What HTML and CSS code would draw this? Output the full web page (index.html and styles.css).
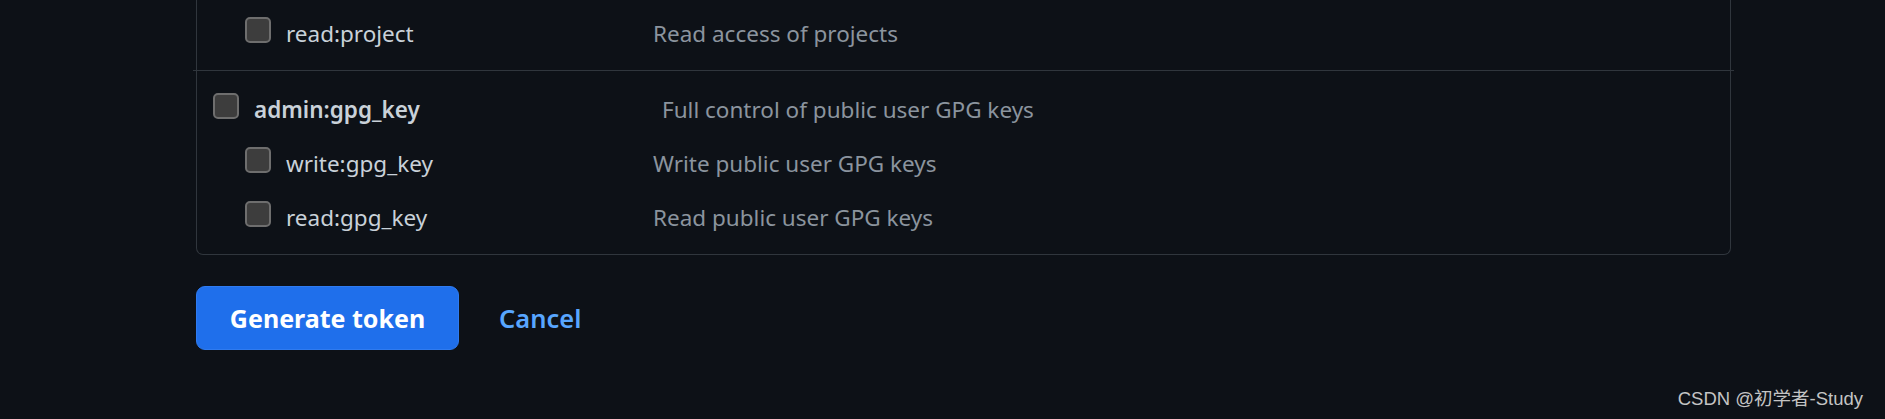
FILE: index.html
```html
<!DOCTYPE html>
<html lang="en">
<head>
<meta charset="utf-8">
<title>Token scopes</title>
<link rel="stylesheet" href="styles.css">
</head>
<body>
<div class="page">
  <div class="token-scopes">
    <div class="scope-group scope-group--partial">
      <div class="scope-row scope-row--child">
        <span class="checkbox"></span>
        <span class="scope-name">read:project</span>
        <span class="scope-desc">Read access of projects</span>
      </div>
    </div>
    <div class="scope-group scope-group--last">
      <div class="scope-row scope-row--parent">
        <span class="checkbox"></span>
        <span class="scope-name">admin:gpg_key</span>
        <span class="scope-desc">Full control of public user GPG keys</span>
      </div>
      <div class="scope-row scope-row--child">
        <span class="checkbox"></span>
        <span class="scope-name">write:gpg_key</span>
        <span class="scope-desc">Write public user GPG keys</span>
      </div>
      <div class="scope-row scope-row--child">
        <span class="checkbox"></span>
        <span class="scope-name">read:gpg_key</span>
        <span class="scope-desc">Read public user GPG keys</span>
      </div>
    </div>
  </div>
  <div class="actions">
    <button class="btn-primary" type="button">Generate token</button>
    <a class="btn-link" href="#">Cancel</a>
  </div>
</div>
<div class="watermark">CSDN @初学者-Study</div>
</body>
</html>
```
FILE: styles.css
```css
html, body {
  margin: 0;
  padding: 0;
  background: #0d1117;
  height: 100%;
  overflow: hidden;
}

body {
  font-family: "Noto Sans", "Open Sans", "DejaVu Sans", sans-serif;
  font-size: 22.5px;
  color: #c9d1d9;
  position: relative;
}

.page {
  padding-left: 196px;
}

.token-scopes {
  width: 1533px;
  border: 1px solid #30363d;
  border-top: 0;
  border-radius: 0 0 7px 7px;
}

.scope-group {
  margin: 0 -4px;
  padding: 12px 0 9px 20px;
  border-bottom: 1px solid #30363d;
}

.scope-group--partial {
  padding-top: 7px;
}

.scope-group--last {
  border-bottom: 0;
  margin: 0;
  padding-left: 16px;
}

.scope-row {
  display: flex;
  align-items: flex-start;
  padding: 10px 0 12px;
}

.scope-row--child {
  padding-left: 32px;
}

.checkbox {
  flex: none;
  width: 22px;
  height: 22px;
  border: 2px solid #6e6e6e;
  border-radius: 5px;
  background: #3d3d3d;
  margin-right: 15px;
}

.scope-name {
  flex: none;
  line-height: 30px;
  margin-top: 2px;
  width: 367px;
  color: #c9d1d9;
}

.scope-row--parent .scope-name {
  width: 408px;
  font-weight: 600;
}

.scope-desc {
  line-height: 30px;
  margin-top: 2px;
  color: #8b949e;
}

.actions {
  display: flex;
  align-items: center;
  gap: 40px;
  margin-top: 31px;
}

.btn-primary {
  font-family: inherit;
  font-size: 25px;
  font-weight: 700;
  line-height: 30px;
  color: #ffffff;
  background: #1f6feb;
  border: 1px solid #2f7bf0;
  border-radius: 9px;
  padding: 16px 0;
  width: 263px;
  text-align: center;
}

.btn-link {
  font-size: 25.5px;
  font-weight: 600;
  color: #58a6ff;
  text-decoration: none;
  line-height: 30px;
}

.watermark {
  position: absolute;
  right: 22px;
  bottom: 9px;
  font-family: "Liberation Sans", "Noto Sans CJK SC", sans-serif;
  font-size: 18.5px;
  line-height: 22px;
  color: #c4c4c4;
}
```
